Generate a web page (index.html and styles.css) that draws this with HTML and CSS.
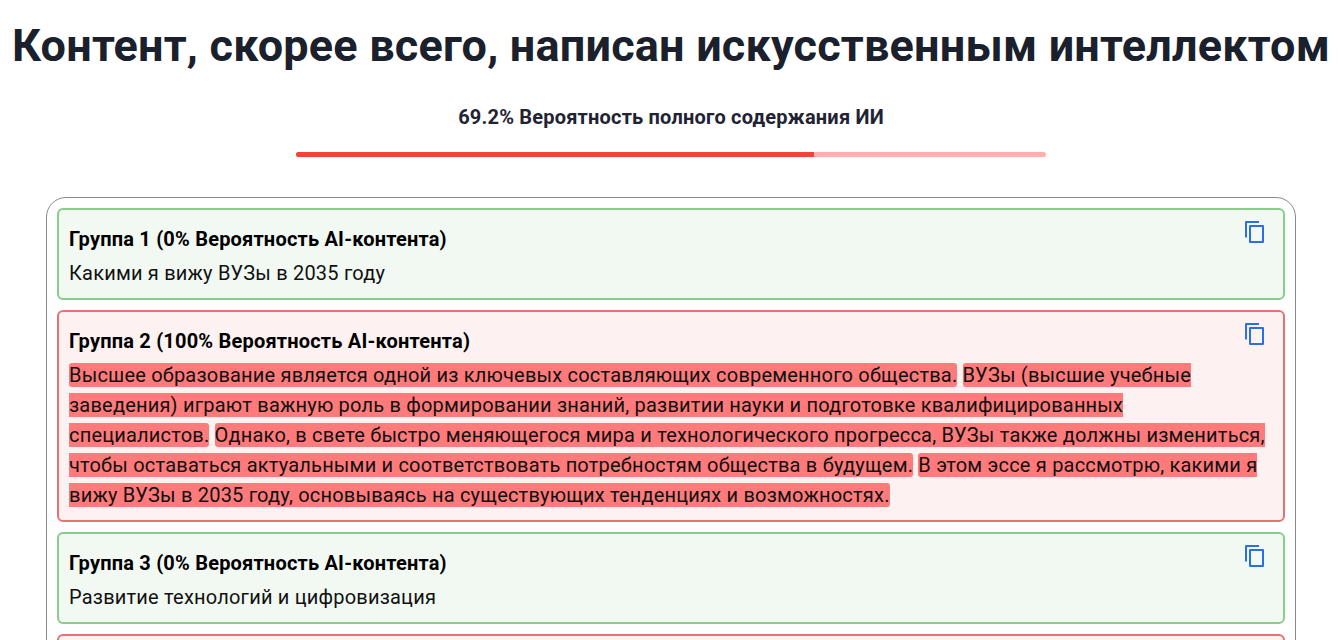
FILE: index.html
```html
<!DOCTYPE html>
<html lang="ru">
<head>
    <meta charset="UTF-8">
    <meta name="viewport" content="width=device-width, initial-scale=1.0">
    <title>Результат проверки</title>
    <link rel="stylesheet" href="styles.css">
</head>
<body>
    <div class="result">
        <h1>Контент, скорее всего, написан искусственным интеллектом</h1>
        <p class="score">69.2% Вероятность полного содержания ИИ</p>
        <div class="progress"><div class="progress-fill"></div></div>

        <div class="groups">
            <div class="group human">
                <svg class="copy" viewBox="0 0 20 22"><path d="M14 1H1v15.500M5 5h13v16H5z"/></svg>
                <div class="group-title">Группа 1 (0% Вероятность AI-контента)</div>
                <div class="group-text">Какими я вижу ВУЗы в 2035 году</div>
            </div>

            <div class="group ai">
                <svg class="copy" viewBox="0 0 20 22"><path d="M14 1H1v15.500M5 5h13v16H5z"/></svg>
                <div class="group-title">Группа 2 (100% Вероятность AI-контента)</div>
                <div class="group-text">
                    <span class="mark">Высшее образование является одной из ключевых составляющих современного общества.</span>
                    <span class="mark">ВУЗы (высшие учебные заведения) играют важную роль в формировании знаний, развитии науки и подготовке квалифицированных специалистов.</span>
                    <span class="mark">Однако, в свете быстро меняющегося мира и технологического прогресса, ВУЗы также должны измениться, чтобы оставаться актуальными и соответствовать потребностям общества в будущем.</span>
                    <span class="mark">В этом эссе я рассмотрю, какими я вижу ВУЗы в 2035 году, основываясь на существующих тенденциях и возможностях.</span>
                </div>
            </div>

            <div class="group human">
                <svg class="copy" viewBox="0 0 20 22"><path d="M14 1H1v15.500M5 5h13v16H5z"/></svg>
                <div class="group-title">Группа 3 (0% Вероятность AI-контента)</div>
                <div class="group-text">Развитие технологий и цифровизация</div>
            </div>

            <div class="group ai">
                <div class="group-title">Группа 4 (100% Вероятность AI-контента)</div>
            </div>
        </div>
    </div>
</body>
</html>
```

FILE: styles.css
```css
html, body {
    height: 640px;
    overflow: hidden;
}

body {
    margin: 0;
    background: #ffffff;
    font-family: Roboto, "Liberation Sans", sans-serif;
    letter-spacing: 0.2px;
    color: #000000;
}

.result {
    padding: 0 42px 0 46px;
}

h1 {
    margin: 0 -46px;
    padding-top: 20px;
    font-size: 45px;
    line-height: 52px;
    font-weight: 700;
    text-align: center;
    white-space: nowrap;
    color: #1a202c;
}

.score {
    margin: 0;
    padding-top: 33px;
    font-size: 20px;
    line-height: 24px;
    font-weight: 700;
    text-align: center;
    color: #1f2333;
}

.progress {
    width: 750px;
    height: 5px;
    margin: 23px auto 0;
    background: #ffb0ae;
    border-radius: 3px;
    overflow: hidden;
}

.progress-fill {
    width: 69.1%;
    height: 100%;
    background: #f44336;
}

.groups {
    margin-top: 40px;
    padding: 10px;
    display: flex;
    flex-direction: column;
    gap: 10px;
    border: 1px solid #8a8a8a;
    border-radius: 20px;
}

.group {
    position: relative;
    padding: 14px 16px 10px 10px;
    border: 2px solid;
    border-radius: 6px;
}

.human {
    background: #f2f9f3;
    border-color: #8bcb8e;
}

.ai {
    background: #fdf2f1;
    border-color: #e57373;
}

.group-title {
    margin-bottom: 4px;
    font-size: 20px;
    line-height: 30px;
    font-weight: 700;
}

.group-text {
    font-size: 20px;
    line-height: 30px;
    color: #111111;
}

.mark {
    background: #ff7a7a;
    border-radius: 3px;
}

.copy {
    position: absolute;
    top: 11px;
    right: 18px;
    width: 20px;
    height: 22px;
    fill: none;
    stroke: #2a6fe8;
    stroke-width: 2;
    stroke-linejoin: round;
}
```
